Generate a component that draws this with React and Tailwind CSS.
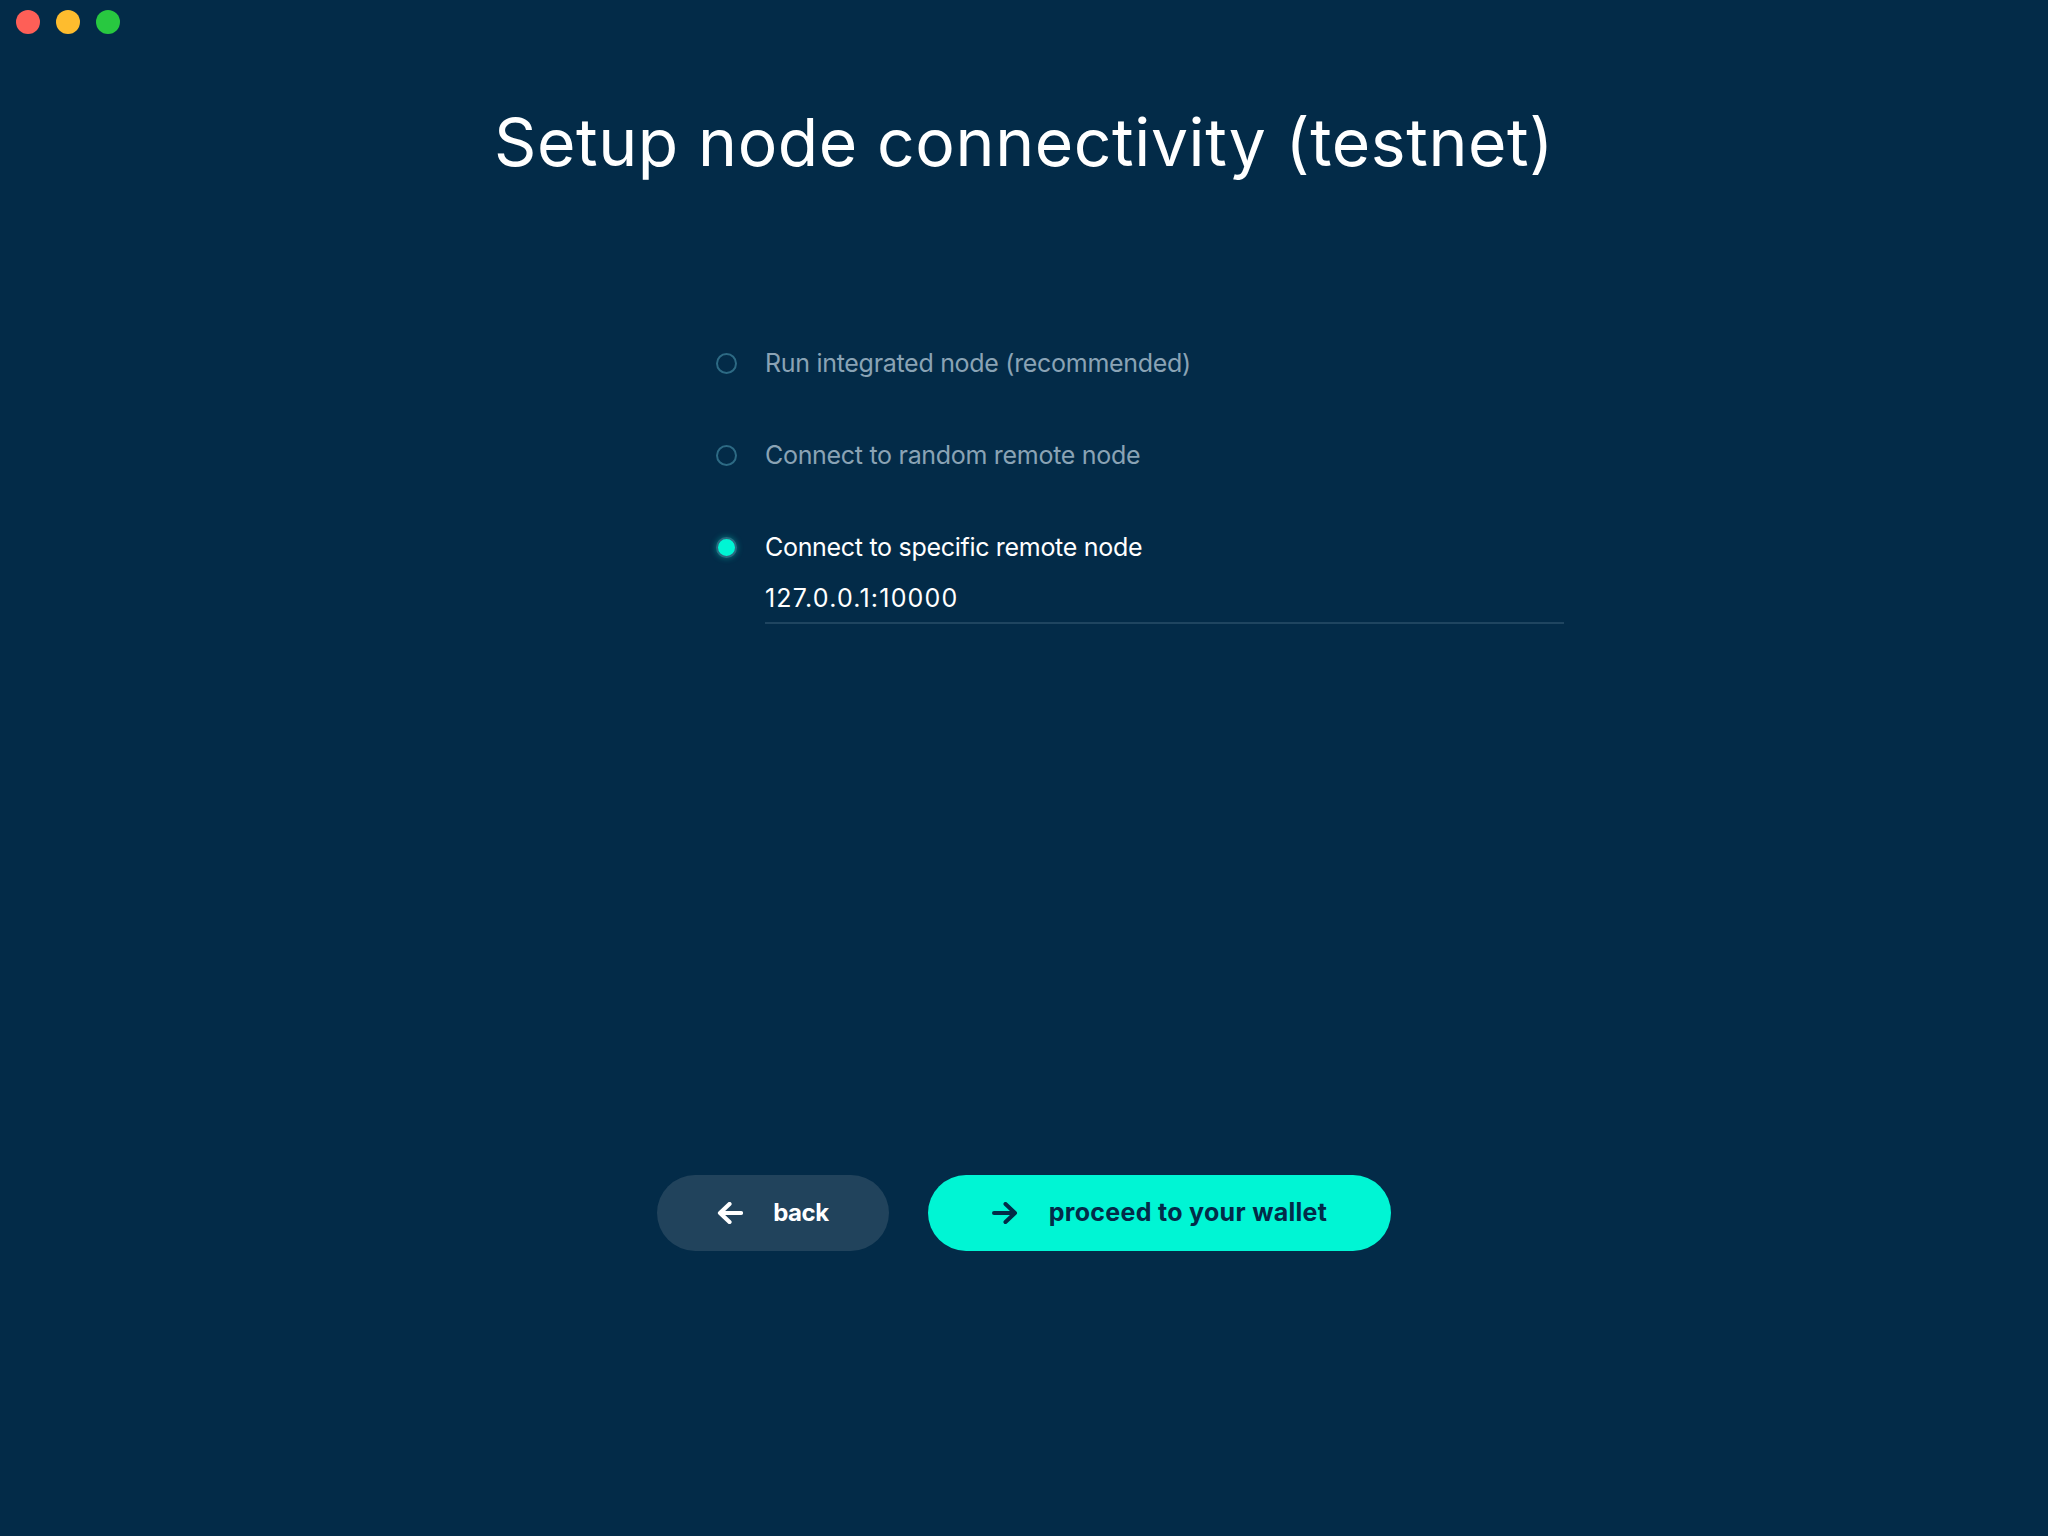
import React, { useState } from "react";

const options = [
  { id: "integrated", label: "Run integrated node (recommended)" },
  { id: "random", label: "Connect to random remote node" },
  { id: "specific", label: "Connect to specific remote node" },
];

// thick arrow used inside both buttons
const Arrow = ({ dir = "right", color }) => (
  <svg width="26" height="22" viewBox="0 0 26 22" fill="none">
    {dir === "left" ? (
      <path
        d="M3 11H24M12.5 2L3 11L12.5 20"
        stroke={color}
        strokeWidth="4.2"
        strokeLinecap="round"
        strokeLinejoin="round"
      />
    ) : (
      <path
        d="M23 11H2M13.5 2L23 11L13.5 20"
        stroke={color}
        strokeWidth="4"
        strokeLinecap="round"
        strokeLinejoin="round"
      />
    )}
  </svg>
);

const Radio = ({ checked }) =>
  checked ? (
    <div className="w-[21px] h-[21px] rounded-full border-2 border-[#2a6a80] bg-[#00f5d4] shadow-[0_0_6px_rgba(0,245,212,0.4)]" />
  ) : (
    <div className="w-[21px] h-[21px] rounded-full border-2 border-[#2d6a84]" />
  );

export default function App() {
  const [selected, setSelected] = useState("specific");
  const [address, setAddress] = useState("127.0.0.1:10000");

  return (
    <div
      className="min-h-screen h-[1536px] bg-[#032b48] text-white flex flex-col"
      style={{ fontFamily: "Inter, 'Noto Sans', sans-serif" }}
    >
      {/* window controls */}
      <div className="h-11 flex items-center gap-4 pl-4">
        <div className="w-6 h-6 rounded-full bg-[#fe5f57]" />
        <div className="w-6 h-6 rounded-full bg-[#febc2e]" />
        <div className="w-6 h-6 rounded-full bg-[#28c840]" />
      </div>

      <h1 className="mt-[58px] text-center text-[66px] leading-[80px] font-normal tracking-[0.6px] text-white">
        Setup node connectivity (testnet)
      </h1>

      {/* node options */}
      <div className="mt-[165px] ml-[716px] w-[848px] flex flex-col gap-[60px]">
        {options.map((opt) => {
          const isSelected = selected === opt.id;
          return (
            <div key={opt.id} className="flex flex-col">
              <div
                className="flex items-center gap-[28px] h-8 cursor-pointer"
                onClick={() => setSelected(opt.id)}
              >
                <Radio checked={isSelected} />
                <span
                  className={`text-[25px] leading-8 tracking-[-0.3px] ${
                    isSelected ? "text-white" : "text-[#8aa3b5]"
                  }`}
                >
                  {opt.label}
                </span>
              </div>
              {opt.id === "specific" && isSelected && (
                <div className="ml-[49px] mt-[19px] border-b-2 border-[#1f4560] pb-2">
                  <input
                    className="w-full bg-transparent outline-none text-[25px] leading-8 h-8 tracking-[1.2px] text-white"
                    value={address}
                    onChange={(e) => setAddress(e.target.value)}
                  />
                </div>
              )}
            </div>
          );
        })}
      </div>

      {/* buttons */}
      <div className="mt-[551px] flex justify-center gap-[39px]">
        <button className="w-[232px] h-[76px] rounded-full bg-[#21435c] flex items-center justify-center gap-[30px] text-white text-[24px] font-bold tracking-[-0.4px]">
          <Arrow dir="left" color="#ffffff" />
          <span>back</span>
        </button>
        <button className="w-[463px] h-[76px] rounded-full bg-[#00f5d4] flex items-center justify-center gap-[31px] text-[#032b48] text-[25px] font-bold tracking-[0.3px]">
          <Arrow dir="right" color="#032b48" />
          <span>proceed to your wallet</span>
        </button>
      </div>
    </div>
  );
}
